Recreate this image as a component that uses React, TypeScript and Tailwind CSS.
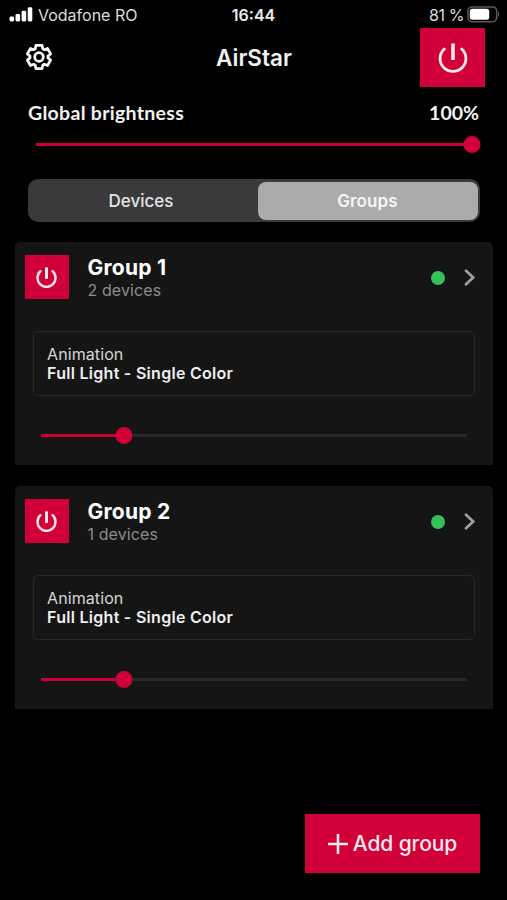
import React, { useState } from 'react';

interface Group {
  id: number;
  name: string;
  devices: number;
  animation: string;
  brightness: number;
}

const groups: Group[] = [
  { id: 1, name: 'Group 1', devices: 2, animation: 'Full Light - Single Color', brightness: 19.6 },
  { id: 2, name: 'Group 2', devices: 1, animation: 'Full Light - Single Color', brightness: 19.6 },
];

const GearIcon: React.FC<{ className: string }> = ({ className }) => (
  <svg viewBox="0 0 28 28" className={className} fill="none" stroke="currentColor" strokeWidth="2.8" strokeLinejoin="round">
    <path d="M10.3 5.8L10.9 2.4H17.1L17.7 5.8L19.3 6.7L22.5 5.5L25.6 10.9L23 13.1V14.9L25.6 17.1L22.5 22.5L19.3 21.3L17.7 22.2L17.1 25.6H10.9L10.3 22.2L8.7 21.3L5.5 22.5L2.4 17.1L5 14.9V13.1L2.4 10.9L5.5 5.5L8.7 6.7Z" />
    <circle cx="14" cy="14" r="4.3" />
  </svg>
);

const PowerIcon: React.FC<{ className: string; strokeWidth: number }> = ({ className, strokeWidth }) => (
  <svg viewBox="0 0 30 30" className={className} fill="none" stroke="currentColor" strokeWidth={strokeWidth}>
    <path d="M15 0.5v16.5" strokeWidth={strokeWidth + 0.8} />
    <path d="M6.3 6a12.9 12.9 0 1 0 17.4 0" strokeLinecap="round" />
  </svg>
);

const Slider: React.FC<{ value: number }> = ({ value }) => (
  <div className="relative flex h-[17px] items-center">
    <div className="h-[3px] w-full rounded-r-full bg-[#292929]">
      <div className="h-full bg-[#cc0038]" style={{ width: `${value}%` }} />
    </div>
    <div
      className="absolute size-[17px] -translate-x-1/2 rounded-full bg-[#d10038]"
      style={{ left: `${value}%` }}
    />
  </div>
);

const StatusBar: React.FC = () => (
  <div className="relative flex h-7 items-center justify-between pt-0.5 pr-[7px] pl-[9px] text-[16px] text-[#dcdcdc]">
    <div className="flex items-center">
      <svg width="24" height="15" viewBox="0 0 24 15" className="mr-[5px] mb-[2px] fill-white">
        <rect x="0.5" y="9.5" width="4.6" height="5" rx="1.4" />
        <rect x="6.5" y="7" width="4.6" height="7.5" rx="1.4" />
        <rect x="12.6" y="3.7" width="4.6" height="10.8" rx="1.4" />
        <rect x="18.7" y="0.3" width="4.6" height="14.2" rx="1.4" />
      </svg>
      <span>Vodafone RO</span>
    </div>
    <span className="absolute left-1/2 -translate-x-1/2 font-semibold text-[#ececec]">16:44</span>
    <div className="flex items-center">
      <span className="mr-[3px] tracking-[-0.4px]">81 %</span>
      <svg width="33" height="17" viewBox="0 0 33 17" fill="none" className="mb-[2px]">
        <rect x="0.9" y="0.9" width="28.8" height="14.8" rx="4.2" stroke="#5a5a5a" strokeWidth="1.5" />
        <rect x="2.8" y="2.8" width="19.4" height="11" rx="2.4" fill="#fff" />
        <path d="M31 5.7v5.2c1.7-.6 1.7-4.6 0-5.2z" fill="#5a5a5a" />
      </svg>
    </div>
  </div>
);

const GroupCard: React.FC<{ group: Group }> = ({ group }) => (
  <div className="h-[222.5px] rounded-t-[5px] bg-[#151515]">
    <div className="flex h-[60px] items-start pt-[13px] pr-[17px] pl-[10px]">
      <button className="flex size-[44px] items-center justify-center bg-[#d10038] pr-px text-[#ffe4ea]">
        <PowerIcon className="size-[21px]" strokeWidth={3.5} />
      </button>
      <div className="ml-[18.5px] flex-1 pt-px">
        <h3 className="text-[21px] leading-6 font-bold tracking-[0.25px] text-white">{group.name}</h3>
        <p className="text-[16px] leading-[21px] tracking-[0.1px] text-[#8c8c8c]">{group.devices} devices</p>
      </div>
      <div className="mt-[14px] flex items-center">
        <div className="size-[14px] rounded-full bg-[#35c15b]" />
        <svg width="12" height="17" viewBox="0 0 12 17" className="ml-[19px]" fill="none" stroke="#a0a0a0" strokeWidth="2.7">
          <path d="M2 1.7l7.2 6.8L2 15.3" strokeLinecap="round" />
        </svg>
      </div>
    </div>
    <div className="mx-[18px] mt-[29px] h-[65px] rounded-[5px] border border-[#272727] pt-[13px] pl-[13px] text-[16px] leading-[19px]">
      <p className="tracking-[0.1px] text-[#d6d6d6]">Animation</p>
      <p className="font-semibold tracking-[0.28px] text-[#efefef]">{group.animation}</p>
    </div>
    <div className="mt-[31px] mr-[26px] ml-[26px]">
      <Slider value={group.brightness} />
    </div>
  </div>
);

const App: React.FC = () => {
  const [tab, setTab] = useState('Groups');

  return (
    <div className="flex h-[900px] w-[507px] flex-col overflow-hidden bg-black font-['Inter',sans-serif] whitespace-nowrap">
      <StatusBar />
      <header className="grid h-[59px] grid-cols-3 items-center pr-[22px] pl-[25px]">
        <GearIcon className="mb-[2px] size-[28px] text-[#f4f4f4]" />
        <h1 className="pt-px pr-[2px] text-center text-[22.5px] font-semibold text-[#f2f2f2]">AirStar</h1>
        <button className="flex h-[59px] w-[65px] items-center justify-center justify-self-end bg-[#d10038] pl-px text-[#ffe9ee]">
          <PowerIcon className="size-[30px]" strokeWidth={2.8} />
        </button>
      </header>

      <section className="mt-[14px] flex h-6 items-center justify-between px-7 font-['Lato',sans-serif] text-[19.5px] font-bold tracking-[0.3px] text-[#f2f2f2]">
        <span>Global brightness</span>
        <span className="tracking-normal">100%</span>
      </section>
      <div className="mt-[11px] mr-[35px] ml-9">
        <Slider value={100} />
      </div>

      <div className="mt-[26px] mr-[27px] ml-7 grid h-[43px] grid-cols-[227px_1fr] rounded-[10px] bg-[#3a3a3c] p-[2.5px]">
        {['Devices', 'Groups'].map((name) => (
          <button
            key={name}
            onClick={() => setTab(name)}
            className={
              tab === name
                ? 'rounded-lg bg-[#ababab] pt-[2px] text-[17px] font-semibold tracking-[0.15px] text-[#f5f5f5]'
                : 'rounded-lg pt-[2px] pr-[6px] text-[17px] font-medium text-[#e4e4e4]'
            }
          >
            {name}
          </button>
        ))}
      </div>

      <main className="mt-5 mr-[14px] ml-[15px] flex flex-col gap-[21.5px]">
        {groups.map((group) => (
          <GroupCard key={group.id} group={group} />
        ))}
      </main>

      <button className="mt-auto mr-[27px] mb-[27px] flex h-[59px] w-[175px] items-center justify-center gap-[5px] self-end bg-[#d10038] text-[21px] font-medium tracking-[-0.1px] text-[#ffe9ee]">
        <svg width="20" height="20" viewBox="0 0 20 20" stroke="currentColor" strokeWidth="2.6">
          <path d="M10 0v20M0 10h20" />
        </svg>
        Add group
      </button>
    </div>
  );
};

export default App;
